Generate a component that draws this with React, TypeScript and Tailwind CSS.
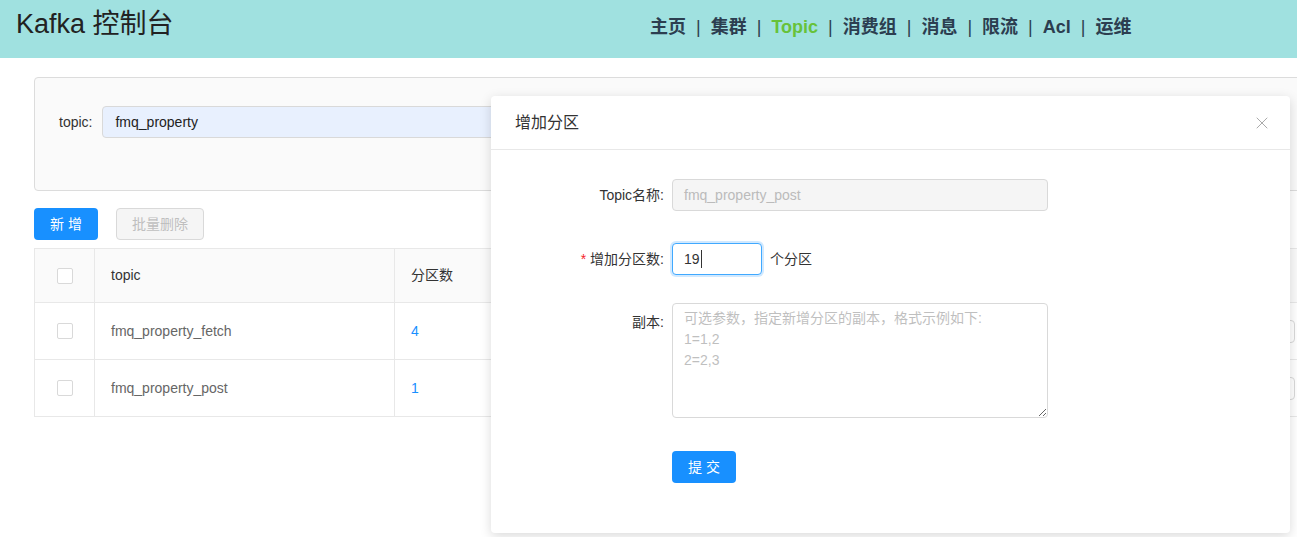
import { X } from "lucide-react";

const navItems = ["主页", "集群", "Topic", "消费组", "消息", "限流", "Acl", "运维"];

const topics = [
  { name: "fmq_property_fetch", partitions: 4 },
  { name: "fmq_property_post", partitions: 1 },
];

function Checkbox() {
  return <span className="block w-[16px] h-[16px] rounded-[2px] border border-[#d9d9d9] bg-white" />;
}

export default function App() {
  return (
    <div className="relative h-[537px] w-full overflow-hidden bg-white text-[14px] text-[#333] font-['Liberation_Sans','Noto_Sans_CJK_SC',sans-serif]">
      {/* HEADER */}
      <header className="flex h-[58px] bg-[#a0e1e0]">
        <h1 className="w-[650px] shrink-0 pl-[16px] pt-[5px] text-[27px] leading-[38px] text-[#222]">Kafka 控制台</h1>
        <nav className="flex items-center gap-[10px] pb-[3px] text-[18px] font-bold text-[#2c3e50]">
          {navItems.map((item, idx) => (
            <div key={item} className="flex items-center gap-[10px]">
              {idx > 0 && <span className="font-normal text-[#2c3e50]">|</span>}
              <span className={item === "Topic" ? "text-[#67c23a]" : ""}>{item}</span>
            </div>
          ))}
        </nav>
      </header>

      {/* MAIN */}
      <main className="w-[1340px] pl-[34px] pt-[19px]">
        {/* search panel */}
        <div className="h-[114px] rounded-[4px] border border-[#dcdcdc] bg-[#fafafa] pt-[28px] pl-[24px]">
          <div className="flex items-center">
            <label className="text-[#333]">topic:</label>
            <div className="ml-[10px] flex h-[32px] w-[560px] items-center rounded-[4px] border border-[#d9d9d9] bg-[#e8f0fe] px-[12px] text-[#222]">
              fmq_property
            </div>
          </div>
        </div>

        {/* actions */}
        <div className="mt-[17px] flex gap-[18px]">
          <button className="h-[32px] w-[64px] rounded-[4px] bg-[#1890ff] text-white tracking-[4px] pl-[4px]">新增</button>
          <button className="h-[32px] w-[88px] rounded-[4px] border border-[#d9d9d9] bg-[#f5f5f5] text-[#bfbfbf]" disabled>
            批量删除
          </button>
        </div>

        {/* table */}
        <table className="mt-[8px] w-full table-fixed border-collapse">
          <colgroup>
            <col className="w-[60px]" />
            <col className="w-[300px]" />
            <col className="w-[300px]" />
            <col />
            <col className="w-[180px]" />
          </colgroup>
          <thead className="bg-[#fafafa]">
            <tr className="h-[54px]">
              <th className="border border-[#e8e8e8] text-left">
                <div className="flex justify-center"><Checkbox /></div>
              </th>
              <th className="border border-[#e8e8e8] px-[16px] text-left font-normal text-[#333]">topic</th>
              <th className="border border-[#e8e8e8] px-[16px] text-left font-normal text-[#333]">分区数</th>
              <th className="border border-[#e8e8e8] px-[16px] text-left font-normal text-[#333]">副本数</th>
              <th className="border border-[#e8e8e8] px-[16px] text-left font-normal text-[#333]">操作</th>
            </tr>
          </thead>
          <tbody>
            {topics.map((t) => (
              <tr key={t.name} className="h-[57px]">
                <td className="border border-[#e8e8e8]">
                  <div className="flex justify-center"><Checkbox /></div>
                </td>
                <td className="border border-[#e8e8e8] px-[16px] text-[#666]">{t.name}</td>
                <td className="border border-[#e8e8e8] px-[16px] text-[#1890ff]">{t.partitions}</td>
                <td className="border border-[#e8e8e8] px-[16px] text-[#666]">1</td>
                <td className="border border-[#e8e8e8] pr-[44px]">
                  <div className="flex justify-end">
                    <button className="h-[23px] w-[60px] rounded-[4px] border border-[#d9d9d9] bg-white text-[12px] text-[#666]">删除</button>
                  </div>
                </td>
              </tr>
            ))}
          </tbody>
        </table>
      </main>

      {/* MODAL */}
      <div className="absolute left-[491px] top-[96px] h-[437px] w-[799px] rounded-[4px] bg-white shadow-[0_3px_12px_rgba(0,0,0,0.15)]">
        <div className="flex h-[54px] items-center justify-between border-b border-[#e8e8e8] pl-[24px] pr-[18px]">
          <span className="text-[16px] text-[#333]">增加分区</span>
          <X size={20} strokeWidth={1} className="text-[#999]" />
        </div>

        <div className="pt-[29px]">
          {/* Topic name */}
          <div className="flex items-center">
            <label className="w-[181px] pr-[8px] text-right text-[#333]">Topic名称:</label>
            <div className="flex h-[32px] w-[376px] items-center rounded-[4px] border border-[#d9d9d9] bg-[#f5f5f5] px-[11px] text-[#bbb]">
              fmq_property_post
            </div>
          </div>

          {/* partitions */}
          <div className="mt-[32px] flex items-center">
            <label className="w-[181px] pr-[8px] text-right text-[#333]">
              <span className="mr-[4px] text-[#f5222d]">*</span>增加分区数:
            </label>
            <div className="flex h-[32px] w-[90px] items-center rounded-[4px] border border-[#40a9ff] bg-white px-[11px] text-[#333] shadow-[0_0_0_2px_rgba(24,144,255,0.2)]">
              19<span className="ml-[1px] inline-block h-[18px] w-px bg-[#333]" />
            </div>
            <span className="ml-[8px] text-[#333]">个分区</span>
          </div>

          {/* replicas */}
          <div className="mt-[28px] flex items-start">
            <label className="w-[181px] pr-[8px] pt-[9px] text-right text-[#333]">副本:</label>
            <textarea
              className="h-[115px] w-[376px] rounded-[4px] border border-[#d9d9d9] px-[11px] py-[4px] leading-[21px] text-[#333] outline-none placeholder:text-[#bfbfbf]"
              placeholder={"可选参数，指定新增分区的副本，格式示例如下:\n1=1,2\n2=2,3"}
            />
          </div>

          {/* submit */}
          <div className="mt-[33px] pl-[181px]">
            <button className="h-[32px] w-[64px] rounded-[4px] bg-[#1890ff] pl-[4px] tracking-[4px] text-white">提交</button>
          </div>
        </div>
      </div>
    </div>
  );
}
